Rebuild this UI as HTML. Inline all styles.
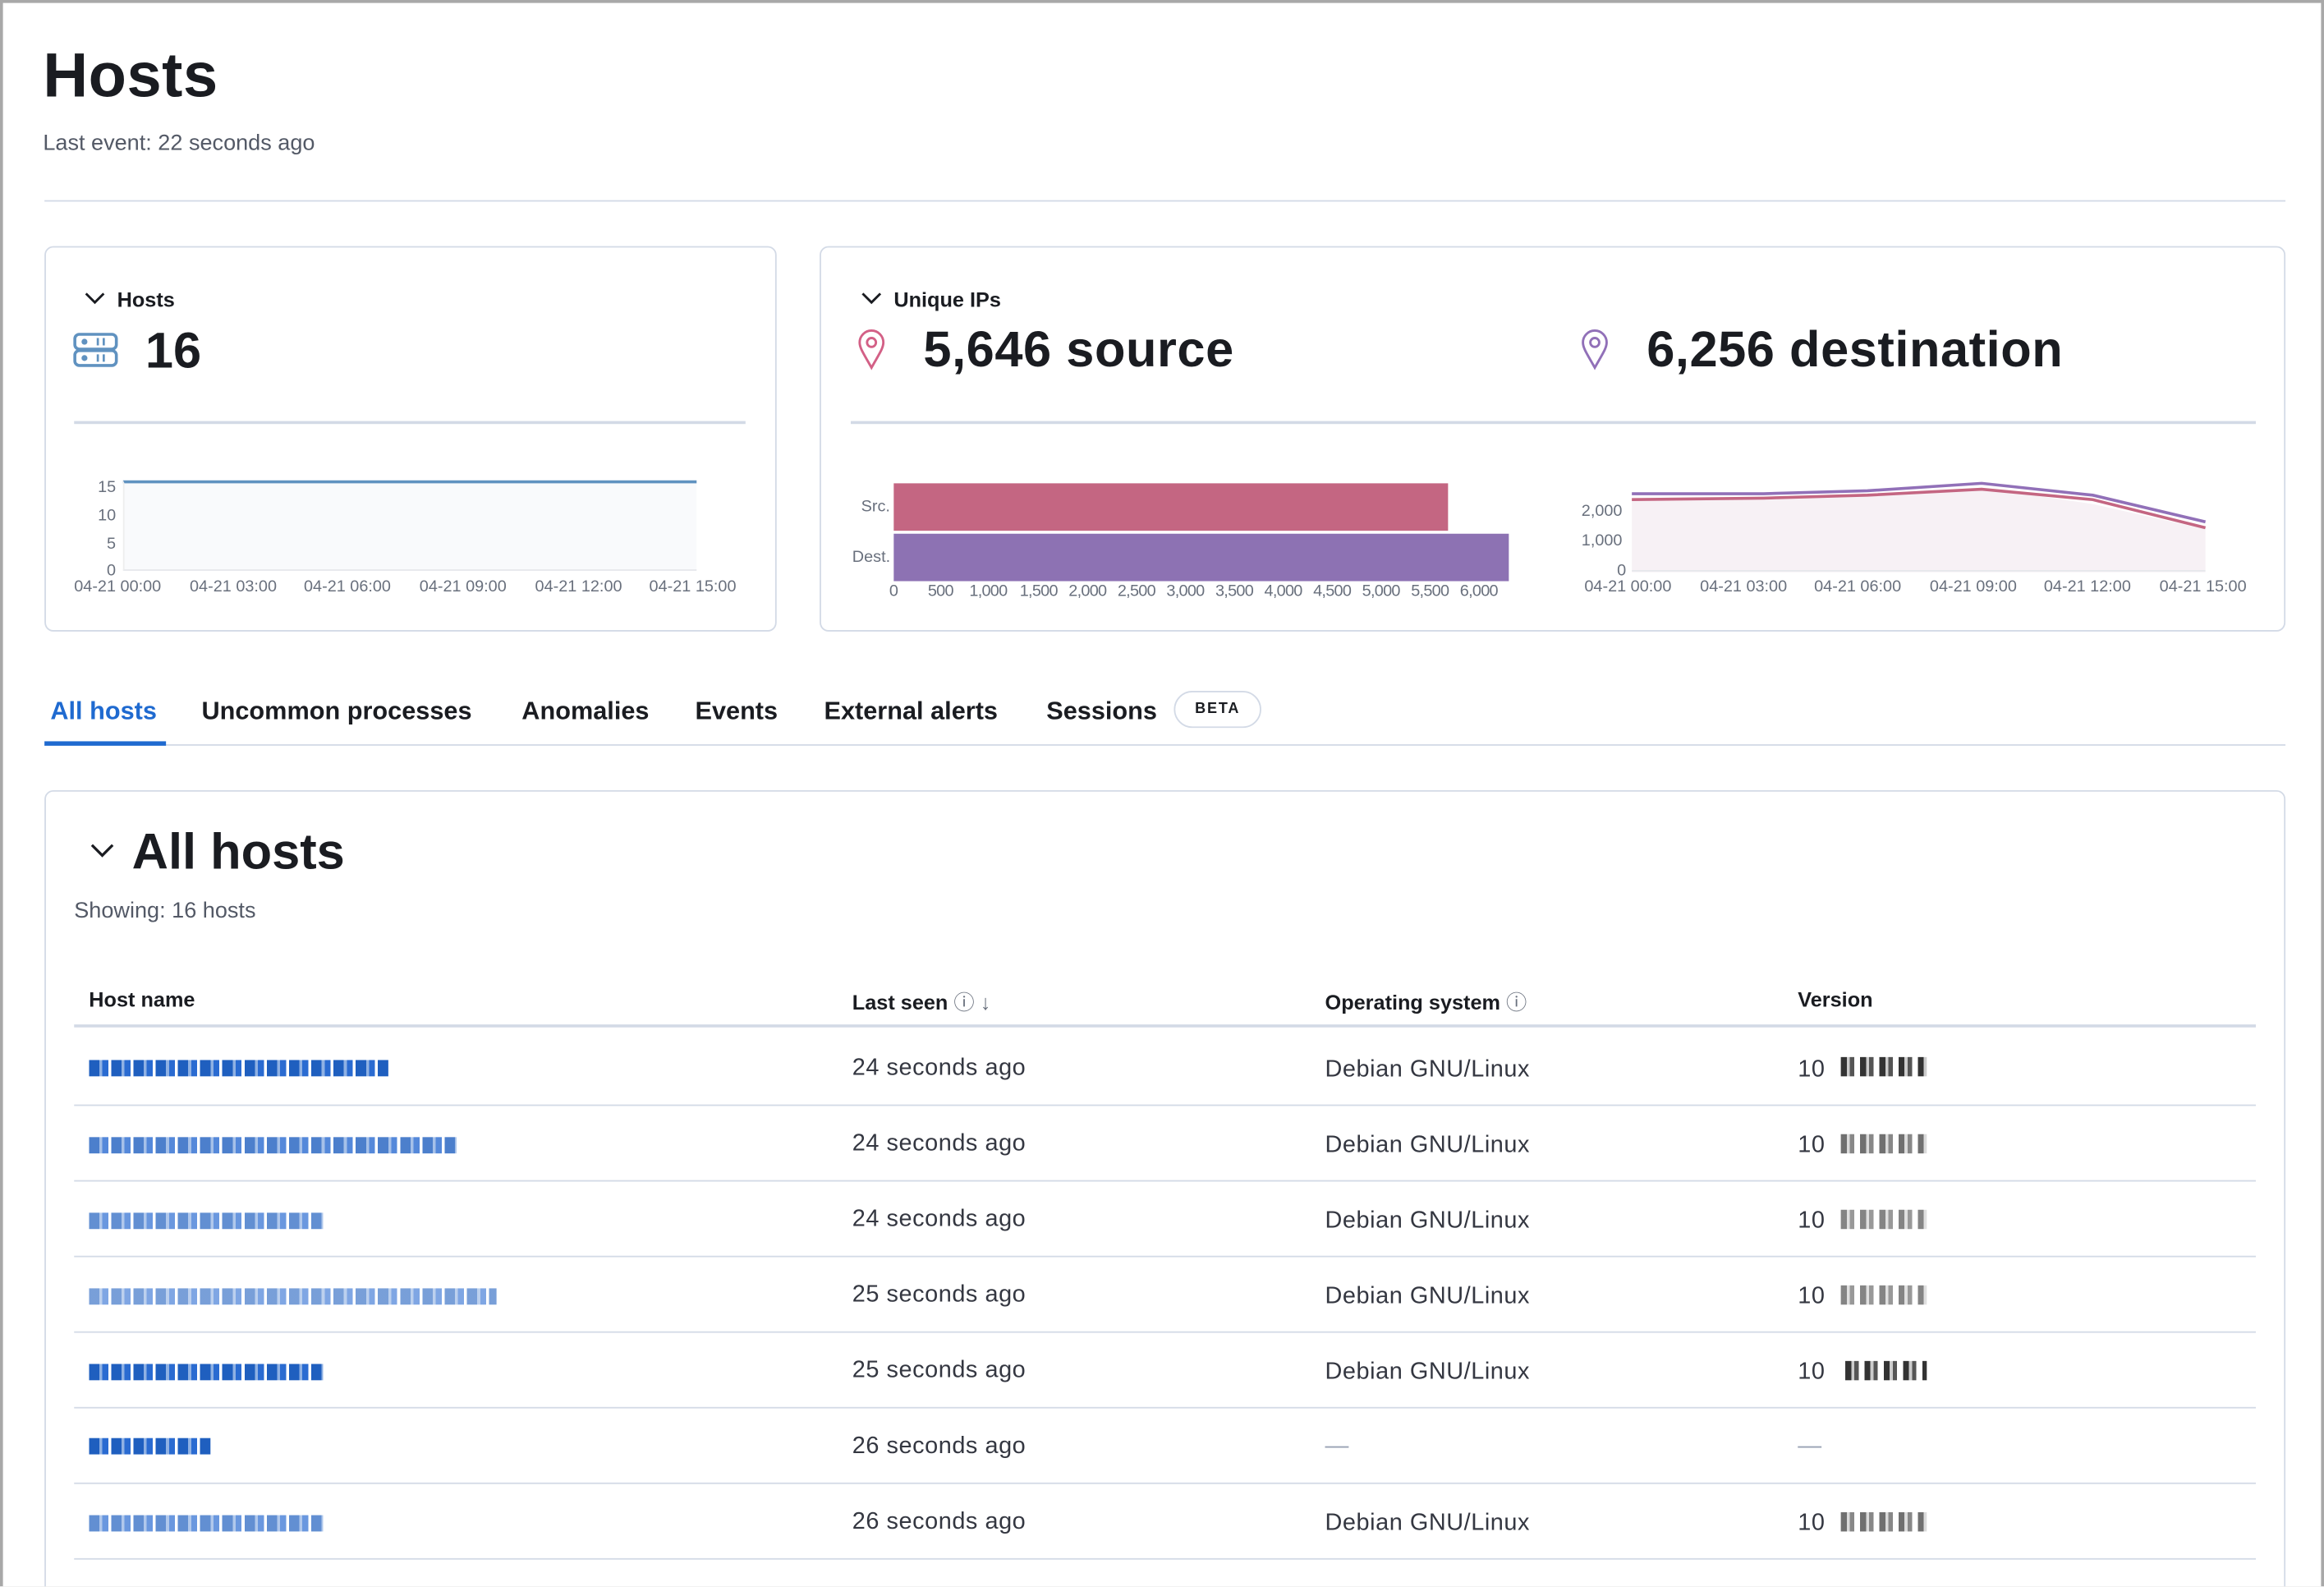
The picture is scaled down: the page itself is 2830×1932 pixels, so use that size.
<!DOCTYPE html>
<html><head><meta charset="utf-8"><style>
*{box-sizing:border-box;margin:0;padding:0}
html,body{width:2830px;height:1932px;overflow:hidden;background:#fff}
#w{position:absolute;left:0;top:0;width:1568px;height:1070px;transform:scale(1.80485);transform-origin:0 0;font-family:"Liberation Sans",sans-serif;color:#1a1c21;overflow:hidden}
#bd{position:absolute;left:0;top:0;width:1568px;height:1072px;border:2px solid #a8a8a8}
.a{position:absolute;white-space:nowrap}
.card{position:absolute;border:1px solid #d3dae6;border-radius:6px;background:#fff}
.hr{position:absolute;height:1px;background:#d3dae6}
.ax{position:absolute;font-size:11px;color:#69707d;white-space:nowrap}
.b{font-weight:bold}
.row{position:absolute;left:50px;width:1472px;height:1px;background:#d3dae6}
.cell{position:absolute;font-size:16px;color:#343741;white-space:nowrap;letter-spacing:0.3px;margin-top:2px}
.blur{position:absolute;height:11px;background:repeating-linear-gradient(90deg,#1f5fbf 0 7px,#8fb1e3 7px 9px,#2a6bd1 9px 13px,#fff 13px 15px)}
.vb{position:absolute;height:13px;background:repeating-linear-gradient(90deg,#333 0 4px,#ccc 4px 6px,#555 6px 9px,#fff 9px 13px)}
.ax2{position:absolute;font-size:11px;color:#69707d;top:393px;letter-spacing:-0.4px}
</style></head><body><div id="w">
<div class="a b" style="left:29px;top:27px;font-size:42px;letter-spacing:0.3px">Hosts</div>
<div class="a" style="left:29px;top:88px;font-size:15px;color:#535966">Last event: 22 seconds ago</div>
<div class="hr" style="left:30px;top:135px;width:1512px"></div>

<div class="card" style="left:30px;top:166px;width:494px;height:260px"></div>
<svg class="a" style="left:56px;top:195px" width="16" height="12"><path d="M2 3l6 6 6-6" fill="none" stroke="#1a1c21" stroke-width="1.6"/></svg>
<div class="a b" style="left:79px;top:194px;font-size:14px">Hosts</div>
<svg class="a" style="left:49px;top:224px" width="32" height="26"><rect x="1.5" y="1.5" width="28" height="10" rx="3" fill="none" stroke="#6092c0" stroke-width="2"/><rect x="1.5" y="12.5" width="28" height="10" rx="3" fill="none" stroke="#6092c0" stroke-width="2"/><circle cx="8" cy="6.5" r="2" fill="#6092c0"/><circle cx="8" cy="17.5" r="2" fill="#6092c0"/><path d="M17 4v5M21 4v5M17 15v5M21 15v5" stroke="#6092c0" stroke-width="1.5"/></svg>
<div class="a b" style="left:98px;top:218px;font-size:34px">16</div>
<div class="hr" style="left:50px;top:284px;width:453px;height:2px"></div>
<div class="a" style="left:83px;top:324px;width:387px;height:61px;background:#f9fafc;border-top:2px solid #6092c0;border-bottom:1px solid #e6e8ec;border-left:1px solid #eee"></div>
<div class="ax" style="left:66px;top:323px">15</div><div class="ax" style="left:66px;top:342px">10</div><div class="ax" style="left:72px;top:361px">5</div><div class="ax" style="left:72px;top:379px">0</div>
<div class="ax" style="left:50px;top:390px">04-21 00:00</div><div class="ax" style="left:128px;top:390px">04-21 03:00</div><div class="ax" style="left:205px;top:390px">04-21 06:00</div><div class="ax" style="left:283px;top:390px">04-21 09:00</div><div class="ax" style="left:361px;top:390px">04-21 12:00</div><div class="ax" style="left:438px;top:390px">04-21 15:00</div>

<div class="card" style="left:553px;top:166px;width:989px;height:260px"></div>
<svg class="a" style="left:580px;top:195px" width="16" height="12"><path d="M2 3l6 6 6-6" fill="none" stroke="#1a1c21" stroke-width="1.6"/></svg>
<div class="a b" style="left:603px;top:194px;font-size:14px">Unique IPs</div>
<svg class="a" style="left:577px;top:222px" width="22" height="28"><path d="M11 26C6 17 3 13 3 9a8 8 0 0 1 16 0c0 4-3 8-8 17z" fill="none" stroke="#d36086" stroke-width="1.6"/><circle cx="11" cy="9" r="3" fill="none" stroke="#d36086" stroke-width="1.6"/></svg>
<div class="a b" style="left:623px;top:217px;font-size:34px;letter-spacing:0.3px">5,646 source</div>
<svg class="a" style="left:1065px;top:222px" width="22" height="28"><path d="M11 26C6 17 3 13 3 9a8 8 0 0 1 16 0c0 4-3 8-8 17z" fill="none" stroke="#9170b8" stroke-width="1.6"/><circle cx="11" cy="9" r="3" fill="none" stroke="#9170b8" stroke-width="1.6"/></svg>
<div class="a b" style="left:1111px;top:217px;font-size:34px;letter-spacing:0.3px">6,256 destination</div>
<div class="hr" style="left:574px;top:284px;width:948px;height:2px"></div>
<div class="a" style="left:603px;top:326px;width:374px;height:32px;background:#c46682"></div>
<div class="a" style="left:603px;top:360px;width:415px;height:32px;background:#8d72b3"></div>
<div class="ax" style="left:581px;top:336px">Src.</div><div class="ax" style="left:575px;top:370px">Dest.</div>
<div class="ax2" style="left:600px">0</div><div class="ax2" style="left:626px">500</div><div class="ax2" style="left:654px">1,000</div><div class="ax2" style="left:688px">1,500</div><div class="ax2" style="left:721px">2,000</div><div class="ax2" style="left:754px">2,500</div><div class="ax2" style="left:787px">3,000</div><div class="ax2" style="left:820px">3,500</div><div class="ax2" style="left:853px">4,000</div><div class="ax2" style="left:886px">4,500</div><div class="ax2" style="left:919px">5,000</div><div class="ax2" style="left:952px">5,500</div><div class="ax2" style="left:985px">6,000</div>
<svg class="a" style="left:1100px;top:321px" width="392" height="68"><path d="M1 16L90 15L160 12L237 8L312 19L388 36V65H1z" fill="#f7f1f5"/><path d="M1 12L90 12L160 10L237 5L312 13L388 31" fill="none" stroke="#9170b8" stroke-width="2"/><path d="M1 16L90 15L160 13L237 9L312 16L388 35" fill="none" stroke="#c46682" stroke-width="2"/><path d="M1 64H388" stroke="#e6e8ec"/></svg>
<div class="ax" style="left:1067px;top:339px">2,000</div><div class="ax" style="left:1067px;top:359px">1,000</div><div class="ax" style="left:1091px;top:379px">0</div>
<div class="ax" style="left:1069px;top:390px">04-21 00:00</div><div class="ax" style="left:1147px;top:390px">04-21 03:00</div><div class="ax" style="left:1224px;top:390px">04-21 06:00</div><div class="ax" style="left:1302px;top:390px">04-21 09:00</div><div class="ax" style="left:1379px;top:390px">04-21 12:00</div><div class="ax" style="left:1457px;top:390px">04-21 15:00</div>

<div class="a b" style="left:34px;top:470px;font-size:17px;color:#1f6ad0">All hosts</div>
<div class="a b" style="left:136px;top:470px;font-size:17px">Uncommon processes</div>
<div class="a b" style="left:352px;top:470px;font-size:17px">Anomalies</div>
<div class="a b" style="left:469px;top:470px;font-size:17px">Events</div>
<div class="a b" style="left:556px;top:470px;font-size:17px">External alerts</div>
<div class="a b" style="left:706px;top:470px;font-size:17px">Sessions</div>
<div class="a b" style="left:792px;top:466px;width:59px;height:25px;border:1px solid #d3dae6;border-radius:13px;font-size:10px;letter-spacing:1px;text-align:center;line-height:23px">BETA</div>
<div class="hr" style="left:30px;top:502px;width:1512px"></div>
<div class="a" style="left:30px;top:500px;width:82px;height:3px;background:#1f6ad0"></div>

<div class="card" style="left:30px;top:533px;width:1512px;height:545px"></div>
<svg class="a" style="left:60px;top:567px" width="18" height="14"><path d="M2 3l7 7 7-7" fill="none" stroke="#1a1c21" stroke-width="1.8"/></svg>
<div class="a b" style="left:89px;top:556px;font-size:34px">All hosts</div>
<div class="a" style="left:50px;top:606px;font-size:15px;color:#535966">Showing: 16 hosts</div>
<div class="a b" style="left:60px;top:666px;font-size:14px">Host name</div>
<div class="a b" style="left:575px;top:666px;font-size:14px">Last seen <span style="font-weight:normal;color:#69707d">ⓘ ↓</span></div>
<div class="a b" style="left:894px;top:666px;font-size:14px">Operating system <span style="font-weight:normal;color:#69707d">ⓘ</span></div>
<div class="a b" style="left:1213px;top:666px;font-size:14px">Version</div>
<div class="row" style="top:691px;height:2px"></div>

<div class="blur" style="left:60px;top:715px;width:202px"></div><div class="cell" style="left:575px;top:710px">24 seconds ago</div><div class="cell" style="left:894px;top:711px">Debian GNU/Linux</div><div class="cell" style="left:1213px;top:711px">10</div><div class="vb" style="left:1242px;top:713px;width:58px"></div>
<div class="row" style="top:745px"></div>
<div class="blur" style="left:60px;top:767px;width:248px;opacity:.8"></div><div class="cell" style="left:575px;top:761px">24 seconds ago</div><div class="cell" style="left:894px;top:762px">Debian GNU/Linux</div><div class="cell" style="left:1213px;top:762px">10</div><div class="vb" style="left:1242px;top:765px;width:58px;opacity:.7"></div>
<div class="row" style="top:796px"></div>
<div class="blur" style="left:60px;top:818px;width:158px;opacity:.7"></div><div class="cell" style="left:575px;top:812px">24 seconds ago</div><div class="cell" style="left:894px;top:813px">Debian GNU/Linux</div><div class="cell" style="left:1213px;top:813px">10</div><div class="vb" style="left:1242px;top:816px;width:58px;opacity:.6"></div>
<div class="row" style="top:847px"></div>
<div class="blur" style="left:60px;top:869px;width:275px;opacity:.6"></div><div class="cell" style="left:575px;top:863px">25 seconds ago</div><div class="cell" style="left:894px;top:864px">Debian GNU/Linux</div><div class="cell" style="left:1213px;top:864px">10</div><div class="vb" style="left:1242px;top:867px;width:58px;opacity:.6"></div>
<div class="row" style="top:898px"></div>
<div class="blur" style="left:60px;top:920px;width:158px"></div><div class="cell" style="left:575px;top:914px">25 seconds ago</div><div class="cell" style="left:894px;top:915px">Debian GNU/Linux</div><div class="cell" style="left:1213px;top:915px">10</div><div class="vb" style="left:1245px;top:918px;width:55px"></div>
<div class="row" style="top:949px"></div>
<div class="blur" style="left:60px;top:970px;width:82px"></div><div class="cell" style="left:575px;top:965px">26 seconds ago</div><div class="cell" style="left:894px;top:965px;color:#98a2b3">—</div><div class="cell" style="left:1213px;top:965px;color:#98a2b3">—</div>
<div class="row" style="top:1000px"></div>
<div class="blur" style="left:60px;top:1022px;width:158px;opacity:.7"></div><div class="cell" style="left:575px;top:1016px">26 seconds ago</div><div class="cell" style="left:894px;top:1017px">Debian GNU/Linux</div><div class="cell" style="left:1213px;top:1017px">10</div><div class="vb" style="left:1242px;top:1020px;width:58px;opacity:.7"></div>
<div class="row" style="top:1051px"></div>
<div id="bd"></div>
</div></body></html>
